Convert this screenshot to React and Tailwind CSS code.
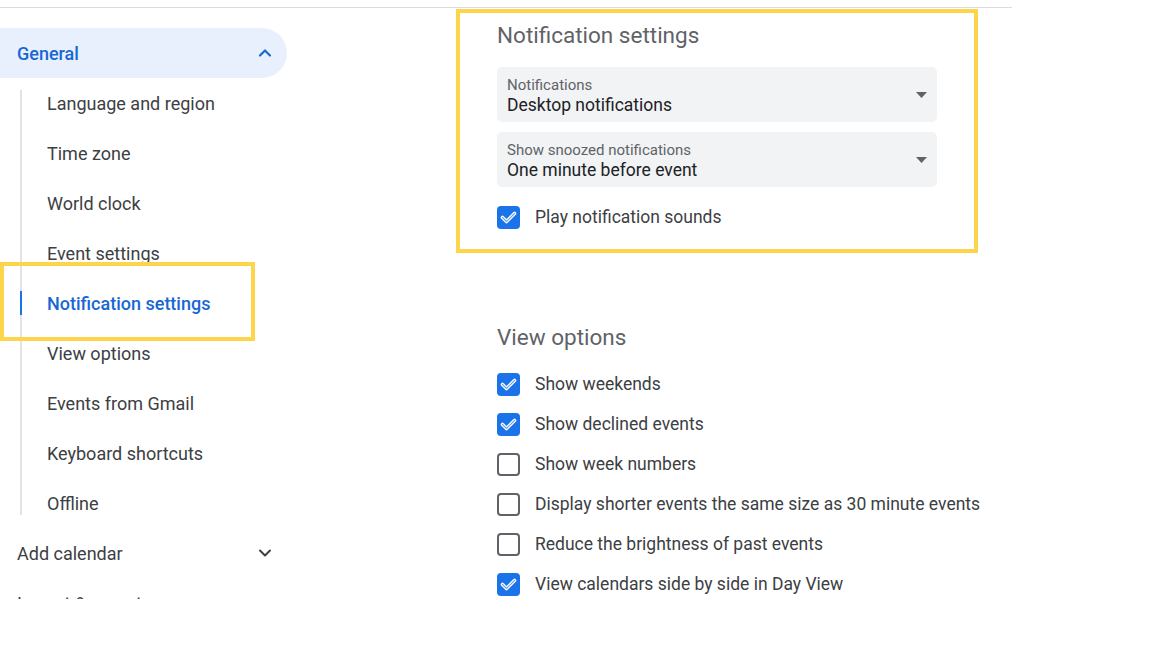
import React from 'react';
import { ChevronUp, ChevronDown } from 'lucide-react';

const subItems = [
    'Language and region',
    'Time zone',
    'World clock',
    'Event settings',
    'Notification settings',
    'View options',
    'Events from Gmail',
    'Keyboard shortcuts',
    'Offline',
];

const viewOptions = [
    { label: 'Show weekends', checked: true },
    { label: 'Show declined events', checked: true },
    { label: 'Show week numbers', checked: false },
    { label: 'Display shorter events the same size as 30 minute events', checked: false },
    { label: 'Reduce the brightness of past events', checked: false },
    { label: 'View calendars side by side in Day View', checked: true },
];

const Checkbox = ({ checked }) => (
    checked ? (
        <div className="w-[23px] h-[23px] rounded-[4px] bg-[#1a73e8] flex items-center justify-center shrink-0">
            <svg width="23" height="23" viewBox="0 0 23 23">
                <path d="M5.5 11.5 L9.5 15.5 L17.5 7.5" fill="none" stroke="#ffffff" strokeWidth="3.6" strokeLinecap="round" strokeLinejoin="round" />
                <path d="M5.5 11.5 L9.5 15.5 L17.5 7.5" fill="none" stroke="#6fa3f0" strokeWidth="1.1" strokeLinecap="round" strokeLinejoin="round" />
            </svg>
        </div>
    ) : (
        <div className="w-[23px] h-[23px] rounded-[4px] border-2 border-[#5f6368] shrink-0" />
    )
);

const SelectBox = ({ label, value }) => (
    <div className="w-[440px] h-[55px] bg-[#f1f3f4] rounded-[5px] flex items-center justify-between pl-[10px] pr-[10px]">
        <div className="flex flex-col pt-[3px]">
            <span className="text-[15px] leading-[16px] text-[#5f6368]">{label}</span>
            <span className="text-[17.5px] leading-[22px] text-[#202124] mt-[1px]">{value}</span>
        </div>
        <svg width="11" height="6" viewBox="0 0 11 6">
            <path d="M0 0 L11 0 L5.5 6 Z" fill="#5f6368" />
        </svg>
    </div>
);

const CheckRow = ({ label, checked }) => (
    <div className="h-[40px] flex items-center gap-[15px]">
        <Checkbox checked={checked} />
        <span className="text-[17.5px] text-[#3c4043]">{label}</span>
    </div>
);

export default function App() {
    return (
        <div className="relative w-[1152px] h-[648px] bg-white overflow-hidden font-['Roboto',sans-serif]">
            <div className="w-[1012px] mt-[7px] border-t border-[#dadce0] flex">
                {/* Sidebar */}
                <div className="w-[287px] h-[591px] overflow-hidden pt-[20px] shrink-0">
                    <div className="h-[50px] rounded-r-full bg-[#e8f0fe] flex items-center justify-between pl-[17px] pr-[12px]">
                        <span className="text-[18px] font-medium text-[#1967d2]">General</span>
                        <ChevronUp size={20} strokeWidth={2.6} className="text-[#1967d2]" />
                    </div>
                    <div className="relative ml-[20px]">
                        <div className="absolute left-0 top-[12px] bottom-[13px] w-[2px] bg-[#e3e3e3]" />
                        {subItems.map((item) => {
                            const active = item === 'Notification settings';
                            return (
                                <div key={item} className="relative h-[50px] flex items-center pl-[27px] pt-[1px]">
                                    {active && <div className="absolute left-0 top-[13px] w-[2px] h-[24px] bg-[#1a73e8]" />}
                                    <span className={active ? 'text-[18px] font-medium text-[#1967d2]' : 'text-[18px] text-[#3c4043]'}>{item}</span>
                                </div>
                            );
                        })}
                    </div>
                    <div className="h-[50px] flex items-center justify-between pl-[17px] pr-[12px]">
                        <span className="text-[18px] text-[#3c4043]">Add calendar</span>
                        <ChevronDown size={20} strokeWidth={2.4} className="text-[#3c4043]" />
                    </div>
                    <div className="h-[50px] flex items-center pl-[17px]">
                        <span className="text-[18px] text-[#3c4043]">Import &amp; export</span>
                    </div>
                </div>

                {/* Main */}
                <div className="pl-[210px] pt-[13px]">
                    <h2 className="text-[22.5px] leading-[28px] text-[#5f6368]">Notification settings</h2>
                    <div className="mt-[18px] flex flex-col gap-[10px]">
                        <SelectBox label="Notifications" value="Desktop notifications" />
                        <SelectBox label="Show snoozed notifications" value="One minute before event" />
                    </div>
                    <div className="mt-[10px]">
                        <CheckRow label="Play notification sounds" checked />
                    </div>

                    <h2 className="mt-[86px] text-[22.5px] leading-[28px] text-[#5f6368]">View options</h2>
                    <div className="mt-[13px]">
                        {viewOptions.map((o) => (
                            <CheckRow key={o.label} label={o.label} checked={o.checked} />
                        ))}
                    </div>
                </div>
            </div>

            {/* Highlight annotations */}
            <div className="absolute left-0 top-[262px] w-[255px] h-[79px] border-[4px] border-[#fdd54a]" />
            <div className="absolute left-[456px] top-[9px] w-[522px] h-[244px] border-[4px] border-[#fdd54a]" />
        </div>
    );
}
